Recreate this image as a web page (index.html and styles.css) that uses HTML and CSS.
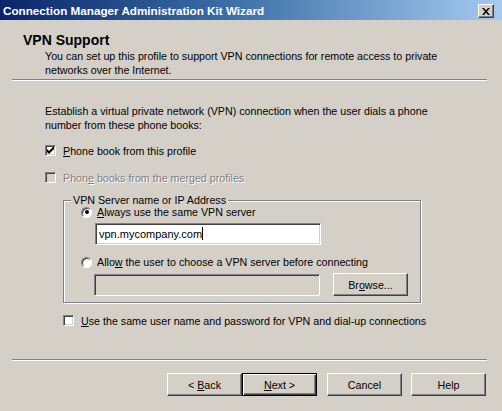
FILE: index.html
```html
<!DOCTYPE html>
<html>
<head>
<meta charset="utf-8">
<link rel="stylesheet" href="styles.css">
</head>
<body>
<div class="window">
  <div class="titlebar">
    <span class="title">Connection Manager Administration Kit Wizard</span>
    <span class="close"><svg width="8" height="7" viewBox="0 0 8 7"><path d="M0 0h2l2 2.5L6 0h2L5 3.5 8 7H6L4 4.5 2 7H0l3-3.5z" fill="#000"/></svg></span>
  </div>
  <div class="header">
    <h1>VPN Support</h1>
    <p>You can set up this profile to support VPN connections for remote access to private networks over the Internet.</p>
  </div>
  <div class="sep"></div>
  <div class="content">
    <p class="intro">Establish a virtual private network (VPN) connection when the user dials a phone number from these phone books:</p>
    <div class="check-row">
      <span class="check checked"><svg width="7" height="7" viewBox="0 0 7 7"><path d="M0 2v3l2 2 5-5V-1L2 4z" fill="#000"/></svg></span>
      <span><u>P</u>hone book from this profile</span>
    </div>
    <div class="check-row disabled">
      <span class="check"></span>
      <span>Phon<u>e</u> books from the merged profiles</span>
    </div>
    <div class="group">
      <span class="legend">VPN Server name or IP Address</span>
      <div class="radio-row">
        <span class="radio on"><span class="dot"></span></span>
        <span><u>A</u>lways use the same VPN server</span>
      </div>
      <div class="field first">vpn.mycompany.com<span class="caret"></span></div>
      <div class="radio-row second">
        <span class="radio"></span>
        <span>Allo<u>w</u> the user to choose a VPN server before connecting</span>
      </div>
      <div class="browse-row">
        <div class="field empty"></div>
        <button class="btn browse">Br<u>o</u>wse...</button>
      </div>
    </div>
    <div class="check-row last">
      <span class="check"></span>
      <span><u>U</u>se the same user name and password for VPN and dial-up connections</span>
    </div>
  </div>
  <div class="sep bottom"></div>
  <div class="buttons">
    <button class="btn">&lt; <u>B</u>ack</button>
    <button class="btn default"><u>N</u>ext &gt;</button>
    <button class="btn gap">Cancel</button>
    <button class="btn gap">Help</button>
  </div>
</div>
</body>
</html>
```
FILE: styles.css
```css
* { box-sizing: border-box; }
html, body { margin: 0; padding: 0; }
body {
  font-family: "Liberation Sans", Arial, sans-serif;
  font-size: 10.7px;
  color: #000;
  background: #d4d0c8;
}
.window {
  width: 502px;
  height: 411px;
  background: #d4d0c8;
  overflow: hidden;
}
.titlebar {
  height: 20px;
  display: flex;
  align-items: center;
  justify-content: space-between;
  padding: 0 8px 0 3px;
  background: linear-gradient(to right, #0a246a 0%, #3a6ea5 45%, #a6caf0 100%);
}
.title {
  color: #fff;
  font-family: "Liberation Sans", Arial, sans-serif;
  font-weight: bold;
  font-size: 11.7px;
}
.close {
  width: 16px;
  height: 14px;
  display: flex;
  align-items: center;
  justify-content: center;
  background: #d4d0c8;
  border: 1px solid;
  border-color: #fff #404040 #404040 #fff;
  box-shadow: inset -1px -1px 0 #808080;
  margin-top: 2px;
}
.header {
  padding: 12px 0 0 23px;
}
.header h1 {
  margin: 0;
  font-size: 14px;
  line-height: 16px;
  font-weight: bold;
}
.header p {
  margin: 1px 0 0 22px;
  width: 420px;
  line-height: 14px;
}
.sep {
  margin: 2px 15px 0 12px;
  height: 2px;
  border-top: 1px solid #808080;
  border-bottom: 1px solid #fff;
}
.content {
  padding: 23px 0 0 45px;
}
.intro {
  margin: 0;
  width: 400px;
  line-height: 14px;
}
.check-row {
  display: flex;
  align-items: center;
  gap: 7px;
  height: 13px;
  margin-top: 14px;
}
.check-row:first-of-type { margin-top: 12px; }
.check {
  width: 11px;
  height: 11px;
  background: #fff;
  border: 1px solid;
  border-color: #808080 #fff #fff #808080;
  box-shadow: inset 1px 1px 0 #404040, inset -1px -1px 0 #d4d0c8;
  display: flex;
  align-items: center;
  justify-content: center;
}
.disabled { color: #808080; text-shadow: 1px 1px 0 #fff; }
.disabled .check { background: #d4d0c8; }
.group {
  position: relative;
  margin: 16px 0 0 18px;
  width: 358px;
  height: 103px;
  border: 1px solid #808080;
  box-shadow: 1px 1px 0 #fff, inset 1px 1px 0 #fff;
  padding: 5px 0 0 17px;
}
.legend {
  position: absolute;
  left: 7px;
  top: -8px;
  padding: 0 2px;
  background: #d4d0c8;
  line-height: 14px;
}
.radio-row {
  display: flex;
  align-items: center;
  gap: 5px;
  height: 12px;
}
.radio-row.second { margin-top: 11px; }
.radio {
  width: 11px;
  height: 11px;
  border-radius: 50%;
  background: #fff;
  border: 1px solid;
  border-color: #808080 #fff #fff #808080;
  box-shadow: inset 1px 1px 0 #404040;
  display: flex;
  align-items: center;
  justify-content: center;
}
.dot { width: 4px; height: 4px; border-radius: 50%; background: #000; }
.field {
  height: 22px;
  background: #fff;
  border: 1px solid;
  border-color: #808080 #fff #fff #808080;
  box-shadow: inset 1px 1px 0 #404040, inset -1px -1px 0 #d4d0c8;
  padding: 3px 0 0 3px;
  line-height: 14px;
}
.field.first { width: 226px; margin: 5px 0 0 14px; font-size: 11px; }
.caret { display: inline-block; width: 1px; height: 13px; background: #000; vertical-align: -2px; }
.browse-row {
  display: flex;
  align-items: center;
  margin: 5px 0 0 13px;
  gap: 13px;
}
.field.empty { width: 226px; background: #d4d0c8; }
.btn {
  font-family: "Liberation Sans", Arial, sans-serif;
  font-size: 10.7px;
  color: #000;
  width: 75px;
  height: 23px;
  padding: 0;
  background: #d4d0c8;
  border: 1px solid;
  border-color: #fff #404040 #404040 #fff;
  box-shadow: inset -1px -1px 0 #808080;
}
.check-row.last { margin: 11px 0 0 18px; }
.sep.bottom { margin-top: 32px; }
.buttons {
  display: flex;
  padding: 12px 0 0 167px;
}
.btn.default {
  border: 1px solid #000;
  box-shadow: inset 1px 1px 0 #fff, inset -1px -1px 0 #404040, inset -2px -2px 0 #808080;
}
.btn.gap { margin-left: 10px; }
.buttons .btn.gap:last-child { margin-left: 9px; }
```
